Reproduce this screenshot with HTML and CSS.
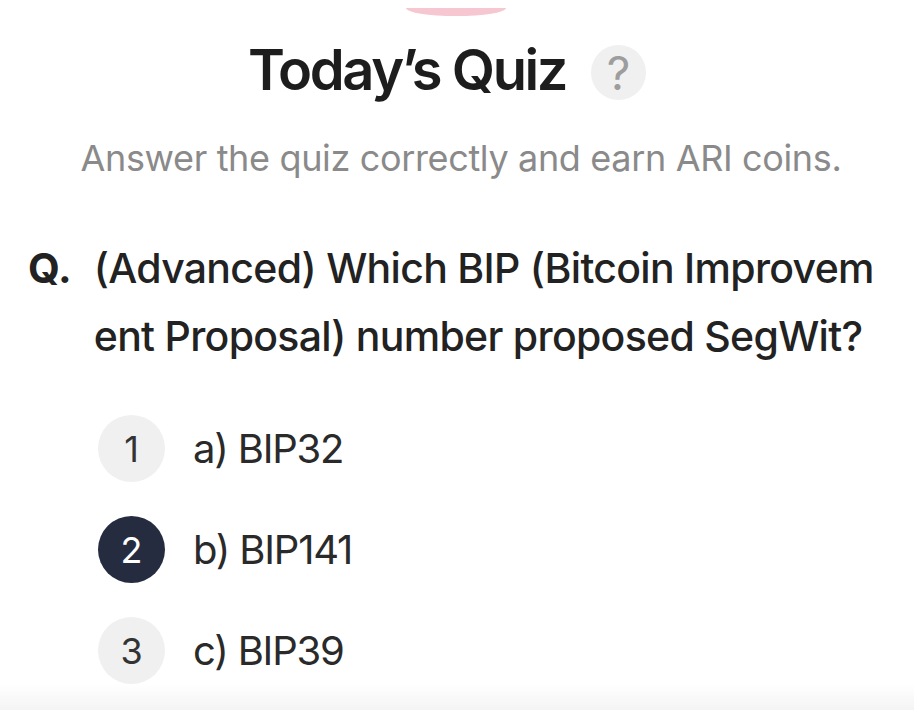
FILE: index.html
```
<!DOCTYPE html>
<html lang="en">
<head>
  <meta charset="UTF-8" />
  <meta name="viewport" content="width=device-width, initial-scale=1.0"/>
  <title>Today's Quiz</title>
  <link rel="stylesheet" href="styles.css">
</head>
<body>

  <div class="screen">
    <div class="peek"></div>

    <div class="quiz-head">
      <h1>Today’s Quiz</h1>
      <span class="help">?</span>
    </div>
    <p class="sub">Answer the quiz correctly and earn ARI coins.</p>

    <div class="question">
      <span class="q-mark">Q.</span>
      <p class="q-text">(Advanced) Which BIP (Bitcoin Improvem<br>ent Proposal) number proposed SegWit?</p>
    </div>

    <ul class="options">
      <li class="option">
        <span class="num">1</span>
        <span class="label">a) BIP32</span>
      </li>
      <li class="option selected">
        <span class="num">2</span>
        <span class="label">b) BIP141</span>
      </li>
      <li class="option">
        <span class="num">3</span>
        <span class="label">c) BIP39</span>
      </li>
    </ul>
  </div>

  <div class="fade"></div>

</body>
</html>
```

FILE: styles.css
```
body {
  font-family: Inter, "Noto Sans", sans-serif;
  background: #fff;
  margin: 0;
  color: #222;
}
.screen {
  display: flex;
  flex-direction: column;
}
.peek {
  align-self: center;
  width: 100px;
  height: 8px;
  margin: 8px 0 0 -2px;
  background: #f7c7d1;
  border-radius: 0 0 50px 50px / 0 0 8px 8px;
}
.quiz-head {
  display: flex;
  align-items: center;
  justify-content: center;
  gap: 25px;
  margin: 21px 0 0 -20px;
  height: 67px;
}
.quiz-head h1 {
  margin: 0;
  font-size: 56px;
  line-height: 67px;
  font-weight: 600;
  letter-spacing: -2.4px;
  color: #1d1d1d;
}
.help {
  width: 55px;
  height: 55px;
  border-radius: 50%;
  background: #f0f0f0;
  color: #9d9d9d;
  font-size: 46px;
  font-weight: 400;
  display: flex;
  align-items: center;
  justify-content: center;
  margin-top: 4px;
}
.sub {
  margin: 33px 0 0 8px;
  text-align: center;
  font-size: 36px;
  line-height: 42px;
  color: #8a8a8a;
  letter-spacing: -0.35px;
}
.question {
  display: flex;
  gap: 22px;
  margin: 55px 0 0 28px;
}
.q-mark {
  font-size: 41px;
  line-height: 68px;
  font-weight: 700;
  color: #222;
}
.q-text {
  margin: 0;
  font-size: 41px;
  line-height: 68px;
  font-weight: 500;
  white-space: nowrap;
  letter-spacing: -0.7px;
  color: #222;
}
.options {
  list-style: none;
  margin: 45px 0 0 98px;
  padding: 0;
  display: flex;
  flex-direction: column;
  gap: 34px;
}
.option {
  display: flex;
  align-items: center;
  gap: 28px;
  height: 67px;
}
.num {
  width: 67px;
  height: 67px;
  border-radius: 50%;
  background: #f0f0f0;
  color: #333;
  font-size: 36px;
  display: flex;
  align-items: center;
  justify-content: center;
}
.option.selected .num {
  background: #262c40;
  color: #fff;
}
.label {
  font-size: 40px;
  letter-spacing: -1.2px;
  color: #2a2a2a;
}
.fade {
  position: fixed;
  left: 0;
  right: 0;
  bottom: 0;
  height: 26px;
  background: linear-gradient(#fff, #f4f4f4);
}
```
